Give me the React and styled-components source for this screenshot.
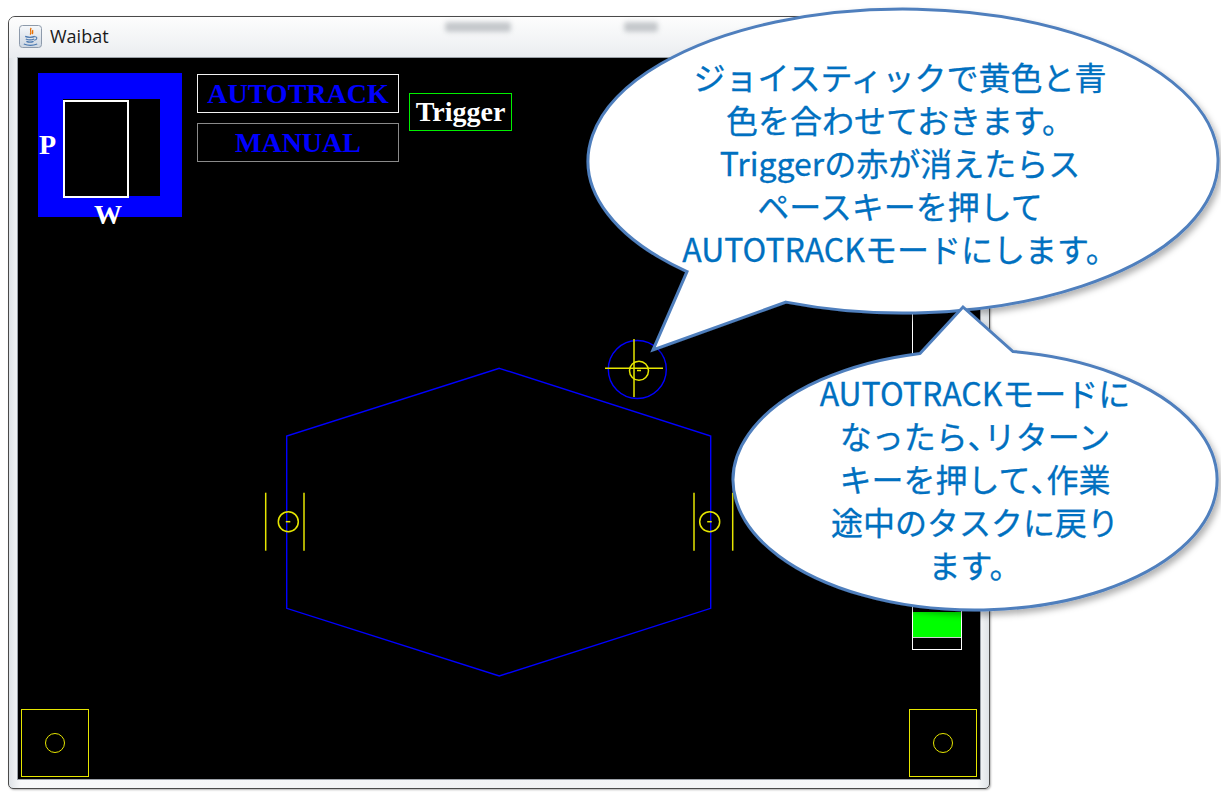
import React from 'react'
import styled, { createGlobalStyle } from 'styled-components'

const GlobalStyle = createGlobalStyle`
  html, body {
    margin: 0;
    padding: 0;
    background: #ffffff;
  }
  body {
    font-family: 'Open Sans', 'Noto Sans', 'Noto Sans CJK JP', sans-serif;
  }
  * {
    box-sizing: border-box;
  }
`

const Page = styled.div`
  position: relative;
  width: 1221px;
  height: 800px;
  overflow: hidden;
  padding: 16px 0 0 8px;
  background: #ffffff;
`

const Window = styled.div`
  width: 982px;
  height: 773px;
  display: flex;
  flex-direction: column;
  border: 1px solid #4a4a4a;
  border-radius: 7px 7px 5px 5px;
  background: linear-gradient(to right, #dfe3e7, #f8f9fa 1.2%, #f1f2f4 50%, #f8f9fa 98.8%, #dfe3e7);
  box-shadow: 1px 1px 2px rgba(0, 0, 0, 0.3);
`

const TitleBar = styled.div`
  height: 41px;
  display: flex;
  align-items: center;
  padding-left: 10px;
  border-radius: 6px 6px 0 0;
  background: linear-gradient(to bottom, #fdfdfd, #f0f2f4 70%, #e9ecef);
`

const AppIcon = styled.svg`
  width: 23px;
  height: 23px;
  flex-shrink: 0;
  margin-top: -2px;
`

const Title = styled.span`
  margin-left: 8px;
  font-family: 'Open Sans', 'Noto Sans', sans-serif;
  font-size: 18px;
  color: #1a1a1a;
  margin-top: -3px;
`

const BlurredItem = styled.span`
  display: block;
  width: ${p => p.$w}px;
  height: 10px;
  margin-left: ${p => p.$gap}px;
  margin-top: -21px;
  background: #b3b7bc;
  border-radius: 3px;
  filter: blur(2.5px);
  opacity: 0.75;
`

const Canvas = styled.div`
  position: relative;
  flex: 1;
  margin: 0 9px 9px 9px;
  padding: 15px 3px 2px 3px;
  display: flex;
  flex-direction: column;
  justify-content: space-between;
  background: #000000;
  box-shadow: 0 0 0 1px #9ba1a8;
`

const Drawing = styled.svg`
  position: absolute;
  left: 0;
  top: 0;
  width: 962px;
  height: 721px;
  pointer-events: none;
`

const Hud = styled.div`
  position: relative;
  display: flex;
  align-items: flex-start;
  padding-left: 17px;
`

const PwGauge = styled.div`
  position: relative;
  flex-shrink: 0;
  width: 144px;
  height: 144px;
  background: #0000ff;
`

const PwWell = styled.div`
  position: absolute;
  left: 25px;
  top: 26px;
  width: 97px;
  height: 97px;
  background: #000000;
`

const PwFrame = styled.div`
  position: absolute;
  left: 25px;
  top: 27px;
  width: 66px;
  height: 98px;
  border: 2px solid #ffffff;
`

const PwLabel = styled.span`
  position: absolute;
  left: ${p => p.$x}px;
  top: ${p => p.$y}px;
  font-family: 'Liberation Serif', 'Times New Roman', serif;
  font-weight: bold;
  font-size: 28px;
  line-height: 1;
  color: #ffffff;
`

const ModeColumn = styled.div`
  display: flex;
  flex-direction: column;
  gap: 10px;
  margin: 1px 0 0 15px;
`

const SerifBox = styled.div`
  display: flex;
  align-items: center;
  justify-content: center;
  width: ${p => p.$w}px;
  height: ${p => p.$h}px;
  border: ${p => p.$bw}px solid ${p => p.$border};
  font-family: 'Liberation Serif', 'Times New Roman', serif;
  font-weight: bold;
  font-size: 28px;
  line-height: 1;
  color: ${p => p.$color};
`

const TriggerBox = styled(SerifBox)`
  margin: 20px 0 0 10px;
`

const BottomRow = styled.div`
  position: relative;
  display: flex;
  justify-content: space-between;
`

const Pad = styled.div`
  width: 68px;
  height: 68px;
  display: flex;
  align-items: center;
  justify-content: center;
  border: 1.5px solid #e6e600;
`

const PadRing = styled.div`
  width: 20px;
  height: 20px;
  border-radius: 50%;
  border: 1.5px solid #e6e600;
`

const Overlay = styled.svg`
  position: absolute;
  left: 0;
  top: 0;
  width: 1221px;
  height: 800px;
  pointer-events: none;
`

const BubbleText = styled.div`
  position: absolute;
  left: ${p => p.$left}px;
  top: ${p => p.$top}px;
  width: ${p => p.$width}px;
  text-align: center;
  font-family: 'Noto Sans CJK JP', 'Noto Sans', sans-serif;
  font-weight: 400;
  font-size: 32px;
  line-height: 43px;
  color: #0070c0;
  white-space: nowrap;
  -webkit-text-stroke: 0.3px #0070c0;
`

const Narrow = styled.span`
  font-feature-settings: 'palt';
`

const yellow = '#e6e600'
const blue = '#0000ff'

const Marker = ({ x, lx, rx }) => (
  <g stroke={yellow} strokeWidth="1.5" fill="none">
    <line x1={lx} y1="434.7" x2={lx} y2="492.7" />
    <line x1={rx} y1="434.7" x2={rx} y2="492.7" />
    <circle cx={x} cy="463.7" r="10" />
    <line x1={x - 2.5} y1="463.7" x2={x + 2} y2="463.7" />
  </g>
)

const JavaIcon = () => (
  <AppIcon viewBox="0 0 23 23">
    <defs>
      <linearGradient id="iconBg" x1="0" y1="0" x2="0" y2="1">
        <stop offset="0" stopColor="#f6f8fb" />
        <stop offset="1" stopColor="#ccd6e1" />
      </linearGradient>
    </defs>
    <rect x="0.5" y="0.5" width="22" height="22" rx="3" fill="url(#iconBg)" stroke="#8d9aab" />
    <path d="M12.2 3 C10 5.2 13.4 6.4 11.2 9.6 M14 5.2 C12.8 6.6 14.6 7.3 13.2 9" stroke="#e76f00" strokeWidth="1.3" fill="none" />
    <path d="M6.2 11.4 C8.5 12.6 13.5 12.6 15.8 11.4 M6.8 14 C9 15 13 15 15.2 14 M7.4 16.4 C9.4 17.3 12.6 17.3 14.6 16.4" stroke="#4a78b0" strokeWidth="1.2" fill="none" />
    <path d="M15.8 11.8 C18.6 11.4 18.6 14.8 15.2 15.2" stroke="#4a78b0" strokeWidth="1.1" fill="none" />
    <path d="M4.8 19 C9 20.6 14 20.6 18.2 19" stroke="#4a78b0" strokeWidth="1.2" fill="none" />
  </AppIcon>
)

const App = () => (
  <Page>
    <GlobalStyle />
    <Window>
      <TitleBar>
        <JavaIcon />
        <Title>Waibat</Title>
        <BlurredItem $w={66} $gap={336} />
        <BlurredItem $w={34} $gap={113} />
      </TitleBar>
      <Canvas>
        <Drawing viewBox="0 0 962 721">
          <polygon
            points="481.3,310.3 692.7,378 692.7,550.3 481.3,618 268.7,550.3 268.7,378"
            fill="none"
            stroke={blue}
            strokeWidth="1.4"
          />
          <Marker x={270.3} lx={247.7} rx={286} />
          <Marker x={691.7} lx={676} rx={714.7} />
          <circle cx="619.3" cy="311.5" r="29" fill="none" stroke={blue} strokeWidth="1.4" />
          <g stroke={yellow} strokeWidth="1.5" fill="none">
            <line x1="587" y1="310.3" x2="645" y2="310.3" />
            <line x1="616" y1="281" x2="616" y2="339" />
            <circle cx="621" cy="312.7" r="9.5" />
            <line x1="619" y1="312.5" x2="623" y2="312.5" />
          </g>
          <rect x="894.5" y="240" width="49" height="351.5" fill="none" stroke="#ffffff" strokeWidth="1" />
          <rect x="895" y="554" width="48" height="25" fill="#00ff00" />
          <line x1="895" y1="579.5" x2="943" y2="579.5" stroke="#d0d0d0" strokeWidth="1" />
        </Drawing>
        <Hud>
          <PwGauge>
            <PwWell />
            <PwFrame />
            <PwLabel $x={1} $y={58}>P</PwLabel>
            <PwLabel $x={56} $y={128}>W</PwLabel>
          </PwGauge>
          <ModeColumn>
            <SerifBox $w={202} $h={39} $bw={1.5} $border="#f2f2f2" $color={blue}>AUTOTRACK</SerifBox>
            <SerifBox $w={202} $h={39} $bw={1.5} $border="#8a8a8a" $color={blue}>MANUAL</SerifBox>
          </ModeColumn>
          <TriggerBox $w={103} $h={38} $bw={1} $border="#00f000" $color="#ffffff">Trigger</TriggerBox>
        </Hud>
        <BottomRow>
          <Pad><PadRing /></Pad>
          <Pad><PadRing /></Pad>
        </BottomRow>
      </Canvas>
    </Window>

    <Overlay viewBox="0 0 1221 800">
      <defs>
        <filter id="bubbleShadow" x="-10%" y="-10%" width="125%" height="130%">
          <feDropShadow dx="3" dy="4" stdDeviation="3" floodColor="#000000" floodOpacity="0.3" />
        </filter>
      </defs>
      <path
        d="M687 271.6 L653 350 L786 302.1 A315 152 0 1 0 687 271.6 Z"
        fill="#ffffff"
        stroke="#4f7fbd"
        strokeWidth="3"
        strokeLinejoin="miter"
        filter="url(#bubbleShadow)"
      />
      <path
        d="M920 353.4 L963 307 L1013 351.6 A242 130 0 1 1 920 353.4 Z"
        fill="#ffffff"
        stroke="#4f7fbd"
        strokeWidth="3"
        strokeLinejoin="miter"
        filter="url(#bubbleShadow)"
      />
    </Overlay>
    <BubbleText $left={600} $top={55} $width={600}>
      ジョイスティックで黄色と青<br />
      色を合わせておきます。<br />
      Triggerの赤が消えたらス<br />
      ペースキーを押して<br />
      AUTOTRACKモードにします。
    </BubbleText>
    <BubbleText $left={725} $top={371} $width={500}>
      AUTOTRACKモードに<br />
      なったら<Narrow>、</Narrow>リターン<br />
      キーを押して<Narrow>、</Narrow>作業<br />
      途中のタスクに戻り<br />
      ます。
    </BubbleText>
  </Page>
)

export default App
